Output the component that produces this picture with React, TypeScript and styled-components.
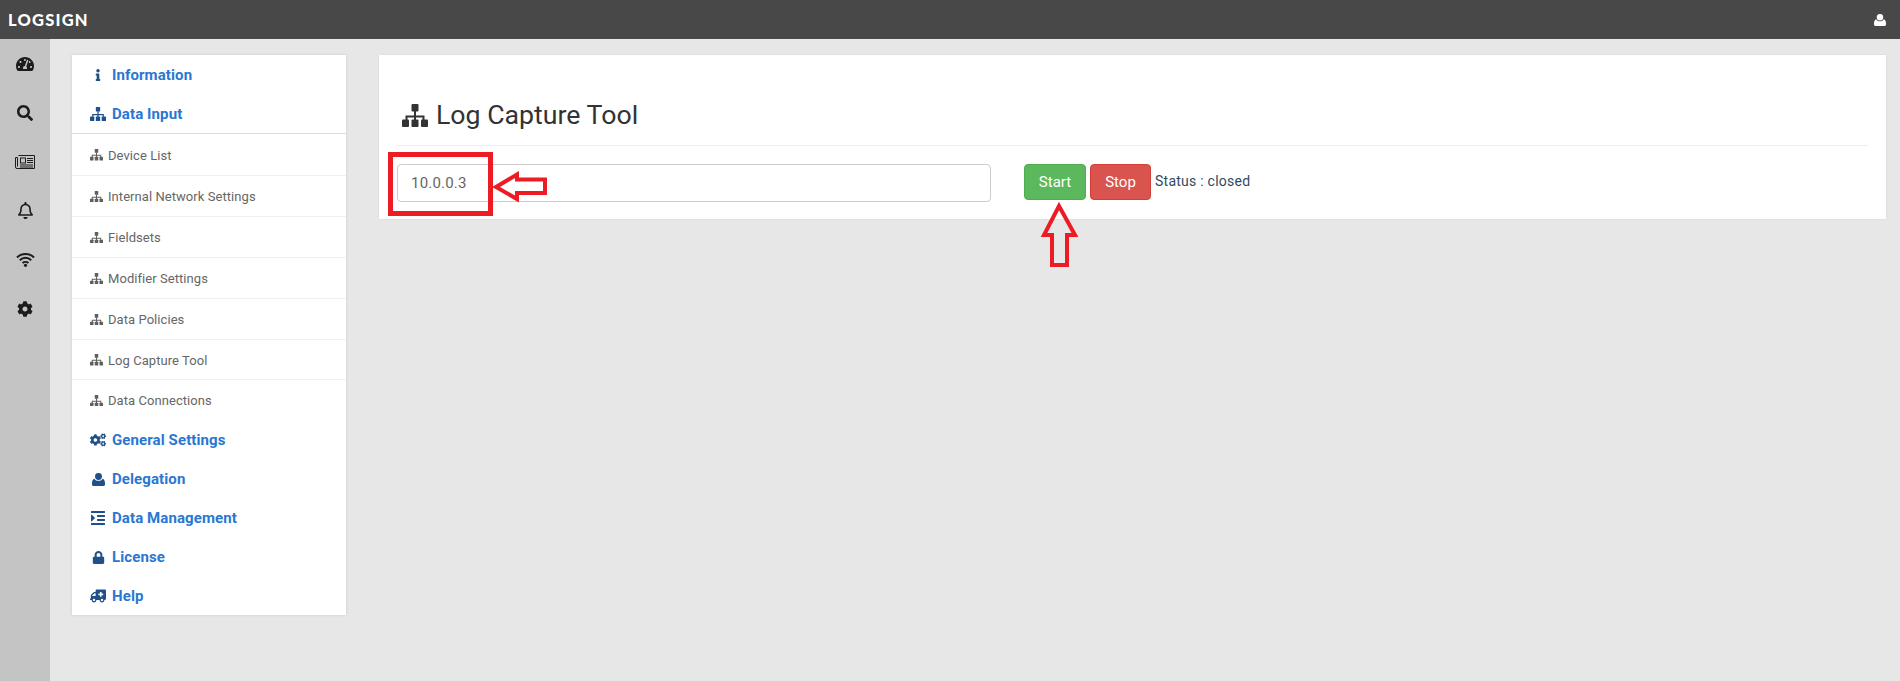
import React from "react"
import styled, { createGlobalStyle } from "styled-components"
import {
  FaAmbulance,
  FaCog,
  FaCogs,
  FaIndent,
  FaInfo,
  FaLock,
  FaRegBell,
  FaSearch,
  FaTachometerAlt,
} from "react-icons/fa"

const GlobalStyle = createGlobalStyle`
  html, body { margin: 0; padding: 0; height: 100%; }
  body { background: #e7e7e7; font-family: Roboto, "Liberation Sans", sans-serif; overflow: hidden; }
  * { box-sizing: border-box; }
`

const Page = styled.div`
  position: relative;
  width: 1900px;
  height: 681px;
  display: flex;
  flex-direction: column;
`

const TopBar = styled.header`
  height: 39px;
  flex: none;
  background: #484848;
  color: #fff;
  display: flex;
  align-items: center;
  justify-content: space-between;
  padding: 0 14px 0 8px;
`

const Logo = styled.span`
  font-family: Lato, sans-serif;
  font-weight: 900;
  font-size: 16.5px;
  letter-spacing: 1.2px;
`

const Body = styled.div`
  flex: 1;
  display: flex;
  min-height: 0;
`

const Rail = styled.nav`
  width: 50px;
  flex: none;
  background: #c4c4c4;
  display: flex;
  flex-direction: column;
  align-items: center;
  color: #1c1c1c;
`

const RailItem = styled.div`
  height: 49px;
  width: 100%;
  flex: none;
  display: flex;
  align-items: center;
  justify-content: center;
`

const Content = styled.div`
  flex: 1;
  display: flex;
  align-items: flex-start;
  gap: 33px;
  padding: 16px 14px 0 22px;
`

const Menu = styled.aside`
  width: 274px;
  flex: none;
  background: #fff;
  box-shadow: 0 0 3px rgba(0, 0, 0, 0.12);
`

const TopItem = styled.div<{ $ruled?: boolean }>`
  height: ${(p) => (p.$ruled ? "40px" : "39px")};
  display: flex;
  align-items: center;
  padding: 1px 0 0 18px;
  color: #2a77d2;
  font-size: 15px;
  font-weight: 700;
  letter-spacing: 0.1px;
  border-bottom: ${(p) => (p.$ruled ? "1px solid #dedede" : "none")};
`

const TopIcon = styled.span`
  width: 16px;
  margin-right: 6px;
  display: flex;
  justify-content: center;
  color: #1e5089;
`

const SubItem = styled.div<{ $height: number; $last?: boolean }>`
  height: ${(p) => p.$height}px;
  display: flex;
  align-items: center;
  padding: 1px 0 0 18px;
  color: #666;
  font-size: 13px;
  letter-spacing: 0.06px;
  border-bottom: ${(p) => (p.$last ? "none" : "1px solid #f0f0f0")};
`

const SubIcon = styled.span`
  width: 13px;
  margin-right: 5px;
  display: flex;
  color: #5f5f5f;
`

const Panel = styled.main`
  flex: 1;
  height: 164px;
  background: #fff;
  padding: 0 18px;
  box-shadow: 0 0 2px rgba(0, 0, 0, 0.08);
`

const Title = styled.h3`
  margin: 0;
  height: 91px;
  padding: 42px 0 0 5px;
  border-bottom: 1px solid #eee;
  display: flex;
  align-items: flex-start;
  gap: 8px;
  font-size: 26.7px;
  line-height: 36px;
  font-weight: 400;
  color: #333;
`

const TitleIcon = styled.span`
  display: flex;
  height: 36px;
  align-items: center;
`

const FormRow = styled.div`
  display: flex;
  align-items: flex-start;
  padding-top: 18px;
`

const AddressInput = styled.input`
  width: 594px;
  height: 38px;
  padding: 0 13px;
  border: 1px solid #ccc;
  border-radius: 4px;
  background: #fff;
  color: #666;
  font-family: inherit;
  font-size: 15px;
  letter-spacing: 0.2px;
  margin-right: 33px;
  outline: none;
`

const ActionButton = styled.button<{ $bg: string; $line: string; $width: number }>`
  height: 36px;
  padding: 0;
  width: ${(p) => p.$width}px;
  margin-right: 4px;
  background: ${(p) => p.$bg};
  border: 1px solid ${(p) => p.$line};
  border-radius: 4px;
  color: #fff;
  font-family: inherit;
  font-size: 15px;
`

const Status = styled.span`
  line-height: 20px;
  margin-top: 7px;
  color: #34495e;
  font-size: 14px;
  letter-spacing: 0.25px;
`

const Annotation = styled.svg`
  position: absolute;
  left: 0;
  top: 0;
  pointer-events: none;
`

const MirroredAmbulance = styled(FaAmbulance)`
  transform: scaleX(-1);
`

// the fa5 glyphs are thinner than the ones in the picture, so these are drawn
const Sitemap = ({ width }: { width: number }) => (
  <svg width={width} height={(width * 23) / 26} viewBox="0 0 26 23" fill="currentColor">
    <rect x="9.5" y="0" width="7" height="7.5" rx="1" />
    <rect x="12" y="7" width="2" height="9" />
    <path d="M3.5 16V11.5H22.5V16H20.5V13.5H5.5V16Z" />
    <rect x="0" y="15.5" width="7" height="7.5" rx="1" />
    <rect x="9.5" y="15.5" width="7" height="7.5" rx="1" />
    <rect x="19" y="15.5" width="7" height="7.5" rx="1" />
  </svg>
)

const User = ({ size }: { size: number }) => (
  <svg width={size} height={size} viewBox="0 0 12 12" fill="currentColor">
    <circle cx="6" cy="3.2" r="3.2" />
    <path d="M2.2 5.2C3 6.7 4.4 7.2 6 7.2S9 6.7 9.8 5.2C11.2 5.6 12 7.2 12 9.5V10.6C12 11.4 11.4 12 10.6 12H1.4C.6 12 0 11.4 0 10.6V9.5C0 7.2.8 5.6 2.2 5.2Z" />
  </svg>
)

const Newspaper = () => (
  <svg width="20" height="14" viewBox="0 0 20 14" fill="none" stroke="currentColor">
    <path d="M3.5 .5H19.5V13.5H2A1.5 1.5 0 0 1 .5 12V2.5H2.5V11.5" />
    <rect x="5.5" y="3" width="5" height="5" />
    <path d="M12 3.5H18M12 5.5H18M12 7.5H18M5 10H18M5 12H18" />
  </svg>
)

const Wifi = () => (
  <svg width="19" height="15" viewBox="0 0 19 15" fill="none" stroke="currentColor" strokeWidth="2">
    <path d="M1 5.5C5.5 .8 13.5 .8 18 5.5" />
    <path d="M3.8 8.3C7 5 12 5 15.2 8.3" />
    <path d="M6.6 11C8.2 9.5 10.8 9.5 12.4 11" />
    <circle cx="9.5" cy="13.3" r="1.6" fill="currentColor" stroke="none" />
  </svg>
)

const subItems = [
  { label: "Device List", height: 42 },
  { label: "Internal Network Settings", height: 41 },
  { label: "Fieldsets", height: 41 },
  { label: "Modifier Settings", height: 41 },
  { label: "Data Policies", height: 41 },
  { label: "Log Capture Tool", height: 40 },
  { label: "Data Connections", height: 40 },
]

const lowerItems = [
  { label: "General Settings", icon: <FaCogs size={16} /> },
  { label: "Delegation", icon: <User size={13} /> },
  { label: "Data Management", icon: <FaIndent size={16} /> },
  { label: "License", icon: <FaLock size={13} /> },
  { label: "Help", icon: <MirroredAmbulance size={16} /> },
]

export default function App() {
  return (
    <Page>
      <GlobalStyle />
      <TopBar>
        <Logo>LOGSIGN</Logo>
        <User size={12} />
      </TopBar>
      <Body>
        <Rail>
          <RailItem><FaTachometerAlt size={18} /></RailItem>
          <RailItem><FaSearch size={16} /></RailItem>
          <RailItem><Newspaper /></RailItem>
          <RailItem><FaRegBell size={17} /></RailItem>
          <RailItem><Wifi /></RailItem>
          <RailItem><FaCog size={16} /></RailItem>
        </Rail>
        <Content>
          <Menu>
            <TopItem><TopIcon><FaInfo size={12} /></TopIcon>Information</TopItem>
            <TopItem $ruled><TopIcon><Sitemap width={16} /></TopIcon>Data Input</TopItem>
            {subItems.map((item, i) => (
              <SubItem key={item.label} $height={item.height} $last={i === subItems.length - 1}>
                <SubIcon><Sitemap width={13} /></SubIcon>
                {item.label}
              </SubItem>
            ))}
            {lowerItems.map((item) => (
              <TopItem key={item.label}><TopIcon>{item.icon}</TopIcon>{item.label}</TopItem>
            ))}
          </Menu>
          <Panel>
            <Title>
              <TitleIcon><Sitemap width={26} /></TitleIcon>
              Log Capture Tool
            </Title>
            <FormRow>
              <AddressInput defaultValue="10.0.0.3" />
              <ActionButton $bg="#5cb85c" $line="#4cae4c" $width={62}>Start</ActionButton>
              <ActionButton $bg="#d9534f" $line="#d43f3a" $width={61}>Stop</ActionButton>
              <Status>Status : closed</Status>
            </FormRow>
          </Panel>
        </Content>
      </Body>
      <Annotation width="1900" height="681" viewBox="0 0 1900 681">
        <rect x="390.5" y="154.5" width="100" height="59" fill="none" stroke="#ed1c24" strokeWidth="5" />
        <path d="M496 187 L517 174.5 L517 179.5 L545 179.5 L545 193 L517 193 L517 199 Z" fill="none" stroke="#ed1c24" strokeWidth="4" />
        <path d="M1059 206 L1075 235 L1067 235 L1067 265 L1052 265 L1052 235 L1044 235 Z" fill="none" stroke="#ed1c24" strokeWidth="4" />
      </Annotation>
    </Page>
  )
}
